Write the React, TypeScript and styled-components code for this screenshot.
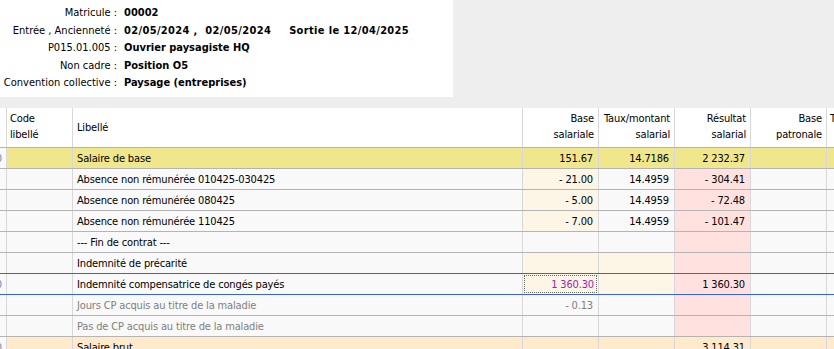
import React from 'react';
import styled, { createGlobalStyle, css } from 'styled-components';

const GlobalStyle = createGlobalStyle`
  html, body { margin: 0; padding: 0; background: #eeeeee; }
  body {
    font-family: "DejaVu Sans Condensed", "DejaVu Sans", sans-serif;
    font-stretch: condensed;
    font-size: 11px;
    color: #000;
    width: 834px;
    height: 349px;
    overflow: hidden;
  }
`;

const COLS = '7px 66px 450px 76px 76px 76px 76px 80px';

const Page = styled.div`
  display: flex;
  flex-direction: column;
  gap: 11px;
`;

const InfoPanel = styled.div`
  width: 453px;
  height: 97px;
  box-sizing: border-box;
  background: #ffffff;
  padding-top: 4px;
  display: grid;
  grid-template-columns: 117px auto;
  column-gap: 7px;
  grid-auto-rows: 17.5px;
  align-content: start;
`;

const InfoLabel = styled.div`
  text-align: right;
  white-space: nowrap;
  line-height: 17.5px;
`;

const InfoValue = styled.div<{ $gap?: number }>`
  font-weight: bold;
  white-space: nowrap;
  line-height: 17.5px;
  display: flex;
  gap: ${p => p.$gap ?? 0}px;
`;

const DateValue = styled.span`
  letter-spacing: 0.35px;
`;

const Table = styled.div`
  width: 834px;
  overflow: hidden;
  background: #f9f9f9;
  letter-spacing: -0.15px;
`;

const HeaderRow = styled.div`
  display: grid;
  grid-template-columns: ${COLS};
  height: 40px;
  box-sizing: border-box;
  background: #ffffff;
  border-bottom: 1px solid #b4b4b4;
`;

const HeadCell = styled.div<{ $align?: 'left' | 'right'; $center?: boolean }>`
  border-right: 1px solid #d8d8d8;
  padding: 3px ${p => (p.$align === 'right' ? '4px' : '3px')} 0 ${p => (p.$align === 'right' ? '0' : '3px')};
  line-height: 15.5px;
  text-align: ${p => p.$align ?? 'left'};
  white-space: pre;
  overflow: hidden;
  ${p =>
    p.$center &&
    css`
      display: flex;
      align-items: center;
      padding-top: 0;
      padding-left: 4px;
    `}
`;

type Tone = 'normal' | 'muted' | 'focus';
type Bg = 'row' | 'khaki' | 'cream' | 'pink' | 'peach';

const BG: Record<Bg, string> = {
  row: '#f9f9f9',
  khaki: '#f0e68c',
  cream: '#fdf5e6',
  pink: '#ffe2e0',
  peach: '#ffeacc',
};

const TONE: Record<Tone, string> = {
  normal: '#000000',
  muted: '#808080',
  focus: '#a01fb0',
};

const Row = styled.div<{ $blueBottom?: boolean }>`
  position: relative;
  display: grid;
  grid-template-columns: ${COLS};
  height: 21px;
  box-sizing: border-box;
  border-bottom: 1px solid ${p => (p.$blueBottom ? '#3a62d9' : '#b4b4b4')};
`;

const Cell = styled.div<{ $bg?: Bg; $tone?: Tone; $align?: 'left' | 'right' }>`
  display: flex;
  align-items: center;
  justify-content: ${p => (p.$align === 'right' ? 'flex-end' : 'flex-start')};
  padding: ${p => (p.$align === 'right' ? '0 5px 0 0' : '0 0 0 4px')};
  background: ${p => BG[p.$bg ?? 'row']};
  color: ${p => TONE[p.$tone ?? 'normal']};
  border-right: 1px solid #d8d8d8;
  white-space: nowrap;
  overflow: hidden;
`;

const LeadCell = styled.div`
  display: flex;
  align-items: center;
  justify-content: flex-end;
  padding-right: 4px;
  background: #f9f9f9;
  color: #7488b0;
  border-right: 1px solid #d8d8d8;
  white-space: nowrap;
  overflow: hidden;
`;

const FocusCell = styled.div<{ $bg?: Bg }>`
  display: flex;
  padding: 1px;
  background: ${p => BG[p.$bg ?? 'cream']};
  border-right: 1px solid #d8d8d8;
  overflow: hidden;
`;

const FocusBox = styled.div`
  flex: 1;
  display: flex;
  align-items: center;
  justify-content: flex-end;
  padding-right: 2px;
  border: 1px dotted #6a6a6a;
  color: ${TONE.focus};
  white-space: nowrap;
`;

const SelectLine = styled.div`
  position: absolute;
  left: 0;
  right: 0;
  top: -1px;
  height: 1px;
  background: #3a62d9;
`;

type RowData = {
  lead?: string;
  label: string;
  base?: string;
  taux?: string;
  res?: string;
  labelBg?: Bg;
  baseBg?: Bg;
  tauxBg?: Bg;
  resBg?: Bg;
  restBg?: Bg;
  tone?: Tone;
  focus?: boolean;
  selected?: boolean;
  blueBottom?: boolean;
};

const rows: RowData[] = [
  { lead: '0', label: 'Salaire de base', base: '151.67', taux: '14.7186', res: '2 232.37', labelBg: 'khaki', baseBg: 'khaki', tauxBg: 'khaki', resBg: 'khaki', restBg: 'khaki' },
  { label: 'Absence non rémunérée 010425-030425', base: '- 21.00', taux: '14.4959', res: '- 304.41', baseBg: 'cream', resBg: 'pink' },
  { label: 'Absence non rémunérée 080425', base: '- 5.00', taux: '14.4959', res: '- 72.48', baseBg: 'cream', resBg: 'pink' },
  { label: 'Absence non rémunérée 110425', base: '- 7.00', taux: '14.4959', res: '- 101.47', baseBg: 'cream', resBg: 'pink' },
  { label: '--- Fin de contrat ---', resBg: 'pink' },
  { label: 'Indemnité de précarité', baseBg: 'cream', tauxBg: 'cream', resBg: 'pink', blueBottom: true },
  { lead: '0', label: 'Indemnité compensatrice de congés payés', base: '1 360.30', res: '1 360.30', baseBg: 'cream', tauxBg: 'cream', resBg: 'pink', focus: true, selected: true, blueBottom: true },
  { label: 'Jours CP acquis au titre de la maladie', base: '- 0.13', resBg: 'pink', tone: 'muted' },
  { label: 'Pas de CP acquis au titre de la maladie', resBg: 'pink', tone: 'muted' },
  { lead: '0', label: 'Salaire brut', res: '3 114.31', labelBg: 'peach', baseBg: 'peach', tauxBg: 'peach', resBg: 'peach', restBg: 'peach' },
];

export default function App() {
  return (
    <>
      <GlobalStyle />
      <Page>
        <InfoPanel>
          <InfoLabel>Matricule :</InfoLabel>
          <InfoValue>00002</InfoValue>
          <InfoLabel>Entrée , Ancienneté :</InfoLabel>
          <InfoValue $gap={18}>
            <DateValue>02/05/2024 ,&nbsp; 02/05/2024</DateValue>
            <DateValue>Sortie le 12/04/2025</DateValue>
          </InfoValue>
          <InfoLabel>P015.01.005 :</InfoLabel>
          <InfoValue>Ouvrier paysagiste HQ</InfoValue>
          <InfoLabel>Non cadre :</InfoLabel>
          <InfoValue>Position O5</InfoValue>
          <InfoLabel>Convention collective :</InfoLabel>
          <InfoValue>Paysage (entreprises)</InfoValue>
        </InfoPanel>

        <Table>
          <HeaderRow>
            <HeadCell />
            <HeadCell>{'Code\nlibellé'}</HeadCell>
            <HeadCell $center>Libellé</HeadCell>
            <HeadCell $align="right">{'Base\nsalariale'}</HeadCell>
            <HeadCell $align="right">{'Taux/montant\nsalarial'}</HeadCell>
            <HeadCell $align="right">{'Résultat\nsalarial'}</HeadCell>
            <HeadCell $align="right">{'Base\npatronale'}</HeadCell>
            <HeadCell>{'Taux'}</HeadCell>
          </HeaderRow>
          {rows.map((r, i) => {
            const tone = r.tone ?? 'normal';
            const labelBg = r.labelBg ?? 'row';
            const rest = r.restBg ?? 'row';
            return (
              <Row key={i} $blueBottom={r.blueBottom}>
                {r.selected && <SelectLine />}
                <LeadCell>{r.lead ?? ''}</LeadCell>
                <Cell $bg={labelBg} />
                <Cell $bg={labelBg} $tone={tone}>{r.label}</Cell>
                {r.focus ? (
                  <FocusCell $bg={r.baseBg}>
                    <FocusBox>{r.base}</FocusBox>
                  </FocusCell>
                ) : (
                  <Cell $bg={r.baseBg ?? 'row'} $tone={tone} $align="right">{r.base ?? ''}</Cell>
                )}
                <Cell $bg={r.tauxBg ?? 'row'} $tone={tone} $align="right">{r.taux ?? ''}</Cell>
                <Cell $bg={r.resBg ?? 'row'} $tone={tone} $align="right">{r.res ?? ''}</Cell>
                <Cell $bg={rest} $align="right" />
                <Cell $bg={rest} />
              </Row>
            );
          })}
        </Table>
      </Page>
    </>
  );
}
